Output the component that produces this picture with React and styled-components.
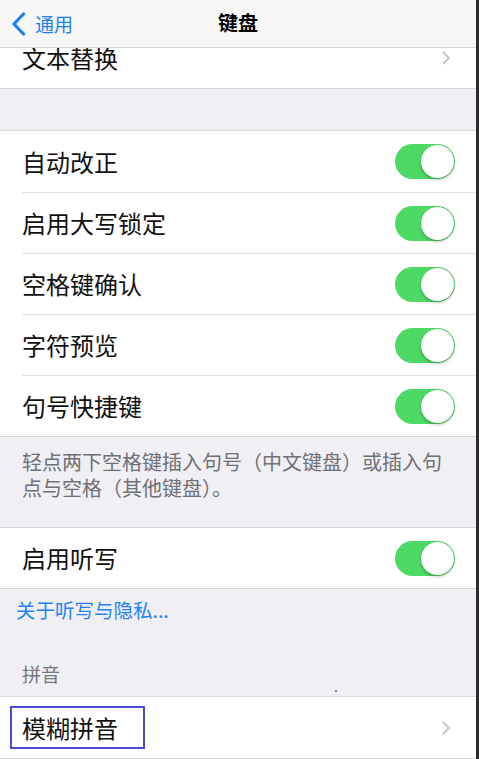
import React from "react";
import styled, { createGlobalStyle } from "styled-components";

const GlobalStyle = createGlobalStyle`
  html, body { margin: 0; padding: 0; background: #efeff4; }
  body { font-family: "Noto Sans CJK SC", "Noto Sans", sans-serif; -webkit-font-smoothing: antialiased; }
  * { box-sizing: border-box; }
`;

const Page = styled.div`
  width: 479px;
  height: 759px;
  overflow: hidden;
  background: #efeff4;
  border-right: 3px solid #2c2c2e;
  display: flex;
  flex-direction: column;
`;

const NavBar = styled.header`
  position: relative;
  z-index: 2;
  flex: 0 0 auto;
  height: 48px;
  background: #f7f7f7;
  border-bottom: 1px solid #d4d4d8;
  display: grid;
  grid-template-columns: 1fr auto 1fr;
  align-items: center;
`;

const BackButton = styled.div`
  display: flex;
  align-items: center;
  gap: 9px;
  padding-left: 11px;
  color: #1a7ef5;
  font-size: 19px;
  line-height: 1;
  svg { display: block; }
`;

const Title = styled.div`
  font-size: 20px;
  font-weight: 700;
  color: #000;
  margin-top: -2px;
`;

const Scroll = styled.main`
  flex: 1 1 auto;
  margin-top: -21px;
  display: flex;
  flex-direction: column;
`;

const Group = styled.section`
  background: #fff;
  border-top: ${(p) => (p.$noTop ? "none" : "1px solid #dadade")};
  border-bottom: 1px solid #d8d8dc;
  margin-top: ${(p) => p.$gap || 0}px;
`;

const Row = styled.div`
  height: ${(p) => p.$h || 61}px;
  display: flex;
  align-items: center;
  padding-left: 22px;
  padding-right: 21px;
  position: relative;
  & + & {
    border-top: 1px solid #e0e0e4;
    margin-left: 22px;
    padding-left: 0;
  }
`;

const Label = styled.span`
  flex: 1;
  font-size: 24px;
  color: #111;
  line-height: 1;
  position: relative;
`;

const Highlight = styled.span`
  position: relative;
  display: inline-block;
  line-height: 24px;
  height: 24px;
  &::after {
    content: "";
    position: absolute;
    left: -12px;
    right: -27px;
    top: -10px;
    bottom: -9px;
    border: 2px solid #4b4bd8;
  }
`;

const SwitchTrack = styled.div`
  width: 60px;
  height: 35px;
  border-radius: 18px;
  background: #4cd964;
  position: relative;
  flex: 0 0 auto;
`;

const SwitchKnob = styled.div`
  position: absolute;
  top: 1px;
  right: 1px;
  width: 33px;
  height: 33px;
  border-radius: 50%;
  background: #fff;
  box-shadow: 0 2px 3px rgba(0, 0, 0, 0.22), 0 0 0 0.5px rgba(0, 0, 0, 0.08);
`;

const Chevron = styled.svg`
  flex: 0 0 auto;
  margin-right: 4px;
  display: block;
`;

const Footer = styled.div`
  padding: 12px 24px 26px 22px;
  font-size: 20px;
  line-height: 26px;
  color: #707075;
`;

const LinkText = styled.div`
  padding: 8px 16px 0 16px;
  font-size: 19.5px;
  line-height: 26px;
  color: #2383f0;
`;

const SectionHeader = styled.div`
  position: relative;
  padding: 38px 22px 9px 22px;
  font-size: 19px;
  line-height: 26px;
  color: #77777c;
`;

const Speck = styled.span`
  position: absolute;
  left: 335px;
  bottom: 4px;
  width: 2px;
  height: 2px;
  background: #5a4fc4;
  border-radius: 1px;
`;

const Switch = () => (
  <SwitchTrack>
    <SwitchKnob />
  </SwitchTrack>
);

const Disclosure = () => (
  <Chevron width="9" height="14" viewBox="0 0 9 14">
    <path d="M1.5 1.5 L7 7 L1.5 12.5" fill="none" stroke="#c4c4c9" strokeWidth="1.8" strokeLinecap="round" strokeLinejoin="round" />
  </Chevron>
);

const toggles = ["自动改正", "启用大写锁定", "空格键确认", "字符预览", "句号快捷键"];

export default function App() {
  return (
    <>
      <GlobalStyle />
      <Page>
        <NavBar>
          <BackButton>
            <svg width="15" height="24" viewBox="0 0 15 24">
              <path d="M12.5 2 L3 12 L12.5 22" fill="none" stroke="#1a7ef5" strokeWidth="3.2" strokeLinecap="round" strokeLinejoin="round" />
            </svg>
            <span>通用</span>
          </BackButton>
          <Title>键盘</Title>
          <div />
        </NavBar>
        <Scroll>
          <Group $noTop>
            <Row>
              <Label>文本替换</Label>
              <Disclosure />
            </Row>
          </Group>
          <Group $gap={41}>
            {toggles.map((t) => (
              <Row key={t}>
                <Label>{t}</Label>
                <Switch />
              </Row>
            ))}
          </Group>
          <Footer>轻点两下空格键插入句号（中文键盘）或插入句点与空格（其他键盘）。</Footer>
          <Group>
            <Row $h={60}>
              <Label>启用听写</Label>
              <Switch />
            </Row>
          </Group>
          <LinkText>关于听写与隐私...</LinkText>
          <SectionHeader>
            拼音
            <Speck />
          </SectionHeader>
          <Group>
            <Row>
              <Label>
                <Highlight>模糊拼音</Highlight>
              </Label>
              <Disclosure />
            </Row>
          </Group>
        </Scroll>
      </Page>
    </>
  );
}
